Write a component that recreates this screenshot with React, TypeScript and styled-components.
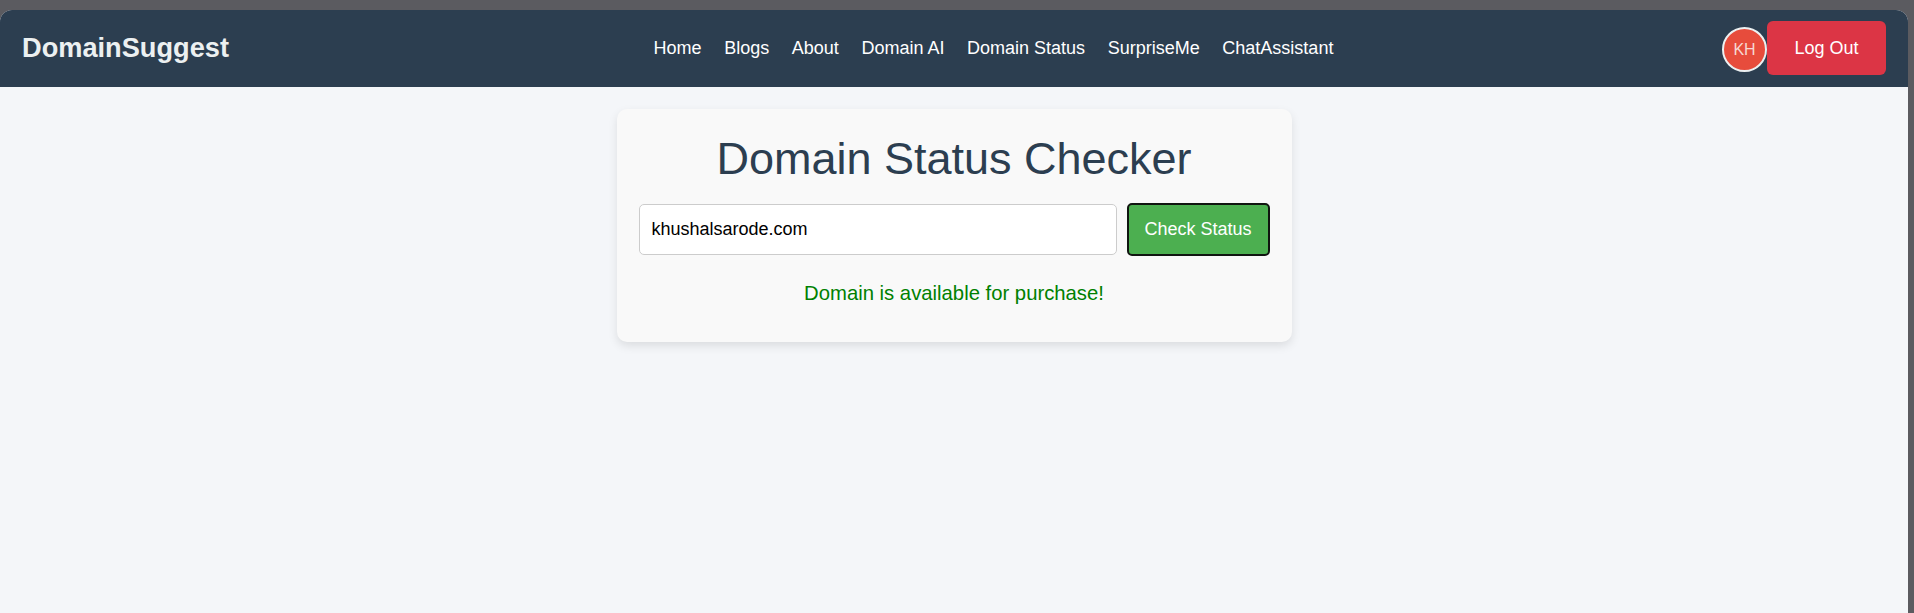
import React, { useState } from "react";
import styled, { createGlobalStyle } from "styled-components";

const NAV_LINKS = ["Home", "Blogs", "About", "Domain AI", "Domain Status", "SurpriseMe", "ChatAssistant"];

const App: React.FC = () => {
    const [domain, setDomain] = useState("khushalsarode.com");

    return (
        <Frame>
            <GlobalStyle />
            <Window>
                <NavBar>
                    <Brand>DomainSuggest</Brand>
                    <NavList>
                        {NAV_LINKS.map((link) => (
                            <NavLink key={link} href="#">
                                {link}
                            </NavLink>
                        ))}
                    </NavList>
                    <UserArea>
                        <Avatar>KH</Avatar>
                        <LogOutButton>Log Out</LogOutButton>
                    </UserArea>
                </NavBar>
                <Main>
                    <Card>
                        <Title>Domain Status Checker</Title>
                        <SearchRow>
                            <DomainInput value={domain} onChange={(e) => setDomain(e.target.value)} />
                            <CheckButton>Check Status</CheckButton>
                        </SearchRow>
                        <StatusMessage>Domain is available for purchase!</StatusMessage>
                    </Card>
                </Main>
            </Window>
        </Frame>
    );
};

export default App;

/* ~~~~~~ -- styling -- ~~~~~~ */

const GlobalStyle = createGlobalStyle`
    html, body {
        margin: 0;
        padding: 0;
        height: 100%;
        overflow: hidden;
        background-color: #5b5b60;
    }
    * {
        box-sizing: border-box;
    }
`;

const Frame = styled.div`
    height: 613px;
    padding: 10px 6px 0 0;
    background-color: #5b5b60;
    font-family: "Liberation Sans", Arial, sans-serif;
`;

const Window = styled.div`
    height: 100%;
    display: flex;
    flex-direction: column;
    background-color: #f4f6f9;
    border-radius: 12px 12px 0 0;
    overflow: hidden;
`;

const NavBar = styled.nav`
    height: 77px;
    flex-shrink: 0;
    display: flex;
    align-items: center;
    justify-content: space-between;
    padding: 0 22px;
    background-color: #2c3e50;
    margin-bottom: 22px;
`;

const Brand = styled.div`
    margin-bottom: 2px;
    font-size: 27.2px;
    font-weight: 700;
    color: #ecf0f1;
    white-space: nowrap;
`;

const NavList = styled.div`
    display: flex;
    gap: 22.6px;
    margin-left: 36px;
`;

const NavLink = styled.a`
    font-size: 18px;
    color: #ffffff;
    text-decoration: none;
    white-space: nowrap;
`;

const UserArea = styled.div`
    display: flex;
    align-items: center;
`;

const Avatar = styled.div`
    width: 45px;
    height: 45px;
    margin-top: 2px;
    border: 2px solid #ecf0f1;
    border-radius: 50%;
    display: flex;
    align-items: center;
    justify-content: center;
    background-color: #e74c3c;
    color: #f6d8d3;
    font-size: 16px;
`;

const LogOutButton = styled.button`
    width: 119px;
    height: 54px;
    margin-bottom: 1px;
    border: none;
    border-radius: 6px;
    background-color: #dc3545;
    color: #ffffff;
    font-family: inherit;
    font-size: 18px;
`;

const Main = styled.main`
    display: flex;
    justify-content: center;
`;

const Card = styled.section`
    width: 675px;
    height: 233px;
    padding: 24px 22px 22px;
    border-radius: 10px;
    background-color: #f9f9f9;
    box-shadow: 0 4px 10px rgba(0, 0, 0, 0.1);
    text-align: center;
`;

const Title = styled.h1`
    margin: 0 0 19px;
    font-size: 45px;
    font-weight: 400;
    line-height: 51px;
    color: #2c3e50;
`;

const SearchRow = styled.div`
    display: flex;
    align-items: center;
    gap: 10px;
`;

const DomainInput = styled.input`
    flex: 1;
    height: 51px;
    min-width: 0;
    padding: 0 12px;
    border: 1px solid #cccccc;
    border-radius: 5px;
    background-color: #ffffff;
    color: #000000;
    font-family: inherit;
    font-size: 18px;
    outline: none;
`;

const CheckButton = styled.button`
    width: 143px;
    height: 53px;
    border: 2px solid #101510;
    border-radius: 5px;
    background-color: #4caf50;
    color: #ffffff;
    font-family: inherit;
    font-size: 18px;
`;

const StatusMessage = styled.p`
    margin: 25px 0 0;
    font-size: 20.3px;
    line-height: 24px;
    color: #008000;
`;
